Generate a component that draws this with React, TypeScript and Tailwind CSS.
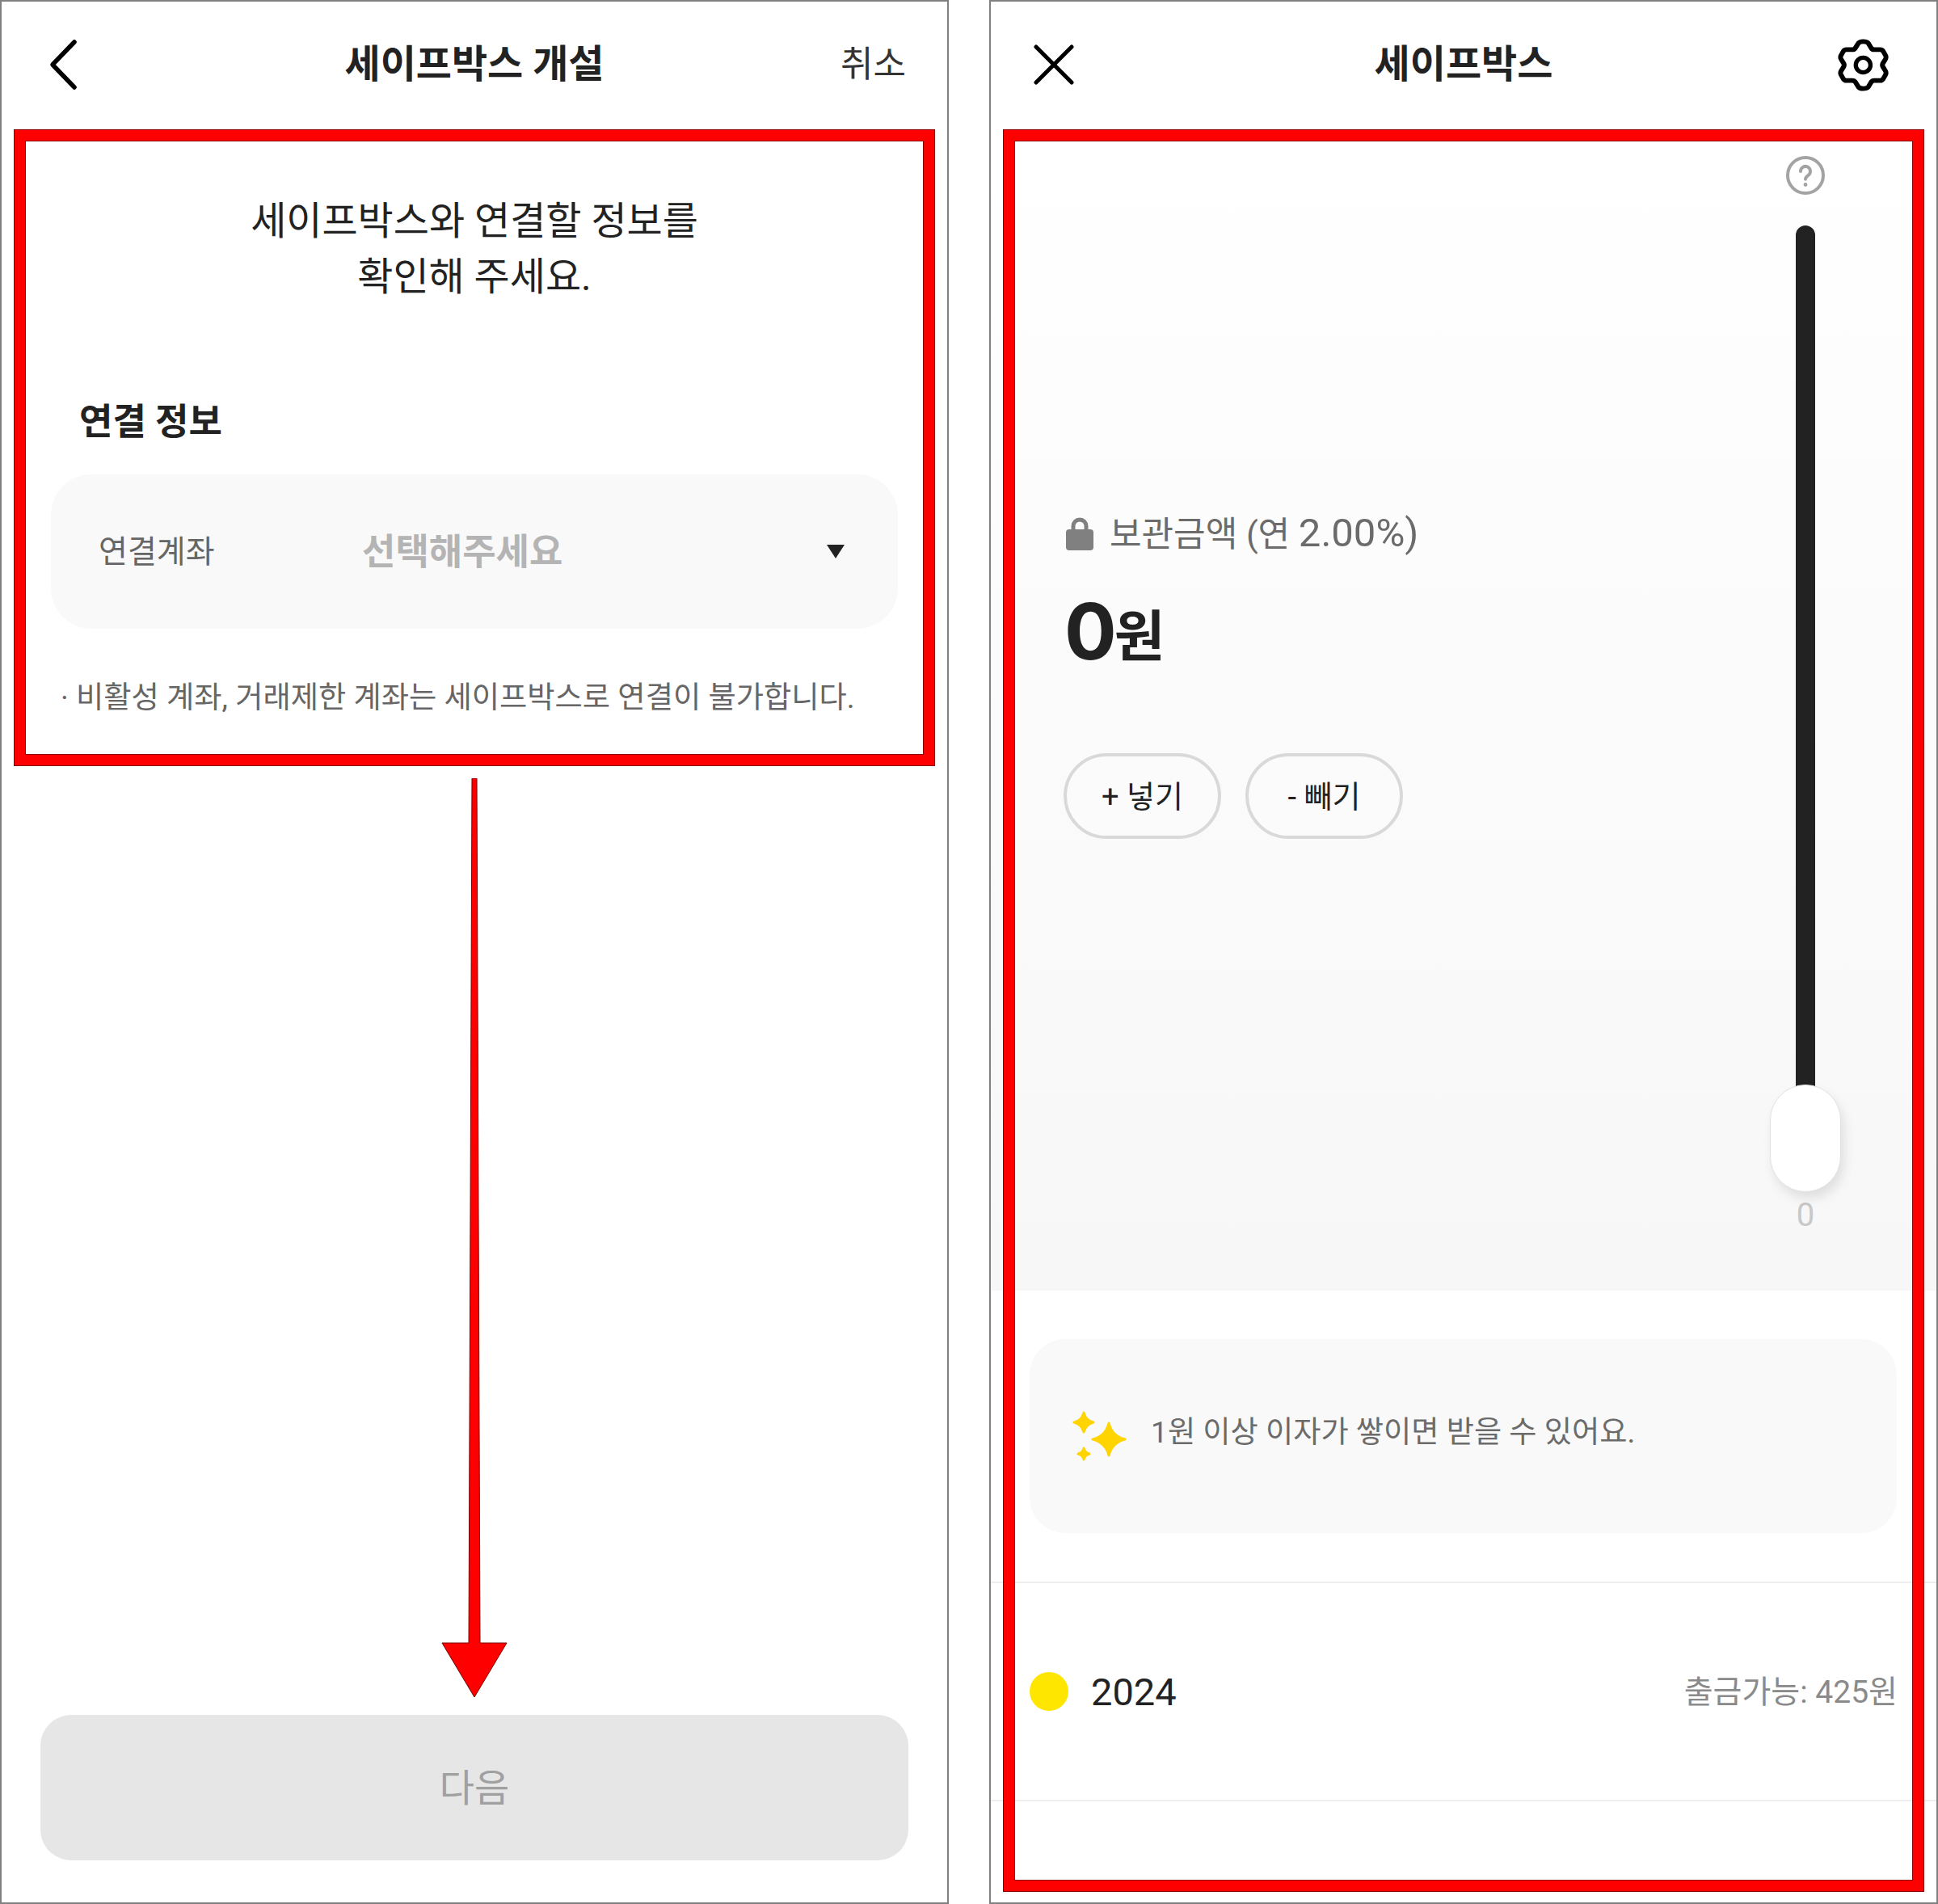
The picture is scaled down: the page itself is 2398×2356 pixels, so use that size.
const Star = ({ c, y, r }: { c: number; y: number; r: number }) => {
  const k = r * 0.2;
  return (
    <path
      d={`M${c} ${y - r}Q${c + k} ${y - k} ${c + r} ${y}Q${c + k} ${y + k} ${c} ${y + r}Q${c - k} ${y + k} ${c - r} ${y}Q${c - k} ${y - k} ${c} ${y - r}Z`}
      fill="#ffd400"
      stroke="#ffd400"
      strokeWidth="3"
      strokeLinejoin="round"
    />
  );
};

const Sparkles = () => (
  <svg width="70" height="64" viewBox="0 0 70 64" className="shrink-0">
    <Star c={15} y={15} r={12} />
    <Star c={46} y={36} r={20} />
    <Star c={15} y={54} r={7} />
  </svg>
);

const Lock = () => (
  <svg width="34" height="41" viewBox="0 0 34 41" className="shrink-0">
    <path d="M9 18V11a8 8 0 0 1 16 0v7" fill="none" stroke="#808080" strokeWidth="5" />
    <rect x="0" y="15" width="34" height="26" rx="4" fill="#808080" />
  </svg>
);

const HelpIcon = () => (
  <svg width="48" height="48" viewBox="0 0 48 48" className="shrink-0">
    <circle cx="24" cy="24" r="22" fill="none" stroke="#a3a3a3" strokeWidth="4" />
    <path d="M18 19a6 6 0 1 1 9.5 4.8c-2.2 1.5-3.5 2.4-3.5 5" fill="none" stroke="#a3a3a3" strokeWidth="4" strokeLinecap="round" />
    <circle cx="24" cy="35.5" r="2.4" fill="#a3a3a3" />
  </svg>
);

const BackIcon = () => (
  <svg width="36" height="64" viewBox="0 0 36 64" fill="none" className="ml-[8px]">
    <path d="M31 4L4 32L31 60" stroke="#000000" strokeWidth="5.5" strokeLinecap="round" strokeLinejoin="round" />
  </svg>
);

const CloseIcon = () => (
  <svg width="50" height="50" viewBox="0 0 50 50" fill="none" className="ml-[13px]">
    <path d="M3 3L47 47M47 3L3 47" stroke="#000000" strokeWidth="5" strokeLinecap="round" />
  </svg>
);

const GearIcon = () => (
  <svg width="94" height="85" viewBox="0 0 300 270" fill="none" className="justify-self-end mr-[3px]">
    <path
      d="M130 48Q135 42 148 42Q162 42 168 48L180 68Q184 74 192 74L215 74Q224 74 228 82L237 98Q240 105 236 112L226 128Q222 135 226 142L236 158Q240 165 237 172L228 188Q224 196 215 196L192 196Q184 196 180 202L168 222Q162 228 148 228Q135 228 130 222L117 202Q113 196 105 196L82 196Q73 196 69 188L60 172Q57 165 61 158L71 142Q75 135 71 128L61 112Q57 105 60 98L69 82Q73 74 82 74L105 74Q113 74 117 68Z"
      stroke="#000000"
      strokeWidth="19"
      strokeLinejoin="round"
    />
    <circle cx="148" cy="135" r="29" stroke="#000000" strokeWidth="17" />
  </svg>
);

const RedBox = ({ className }: { className: string }) => (
  <div
    className={`absolute pointer-events-none border-[13px] border-[#ff0000] shadow-[0_0_0_1px_#8a0000,inset_0_0_0_1px_#8a0000] ${className}`}
  />
);

const SetupScreen = () => (
  <div className="relative w-[1174px] h-[2356px] border-2 border-[#808080] bg-white flex flex-col">
    <div className="grid grid-cols-[1fr_auto_1fr] items-center h-[155px] px-[51px]">
      <BackIcon />
      <div className="text-[48px] font-bold text-[#222222]">세이프박스 개설</div>
      <div className="justify-self-end text-[44px] text-[#333333]">취소</div>
    </div>

    <div className="mt-[82px] text-center text-[48px] leading-[69px] text-[#222222]">
      세이프박스와 연결할 정보를
      <br />
      확인해 주세요.
    </div>

    <div className="mt-[116px] ml-[96px] text-[45px] leading-[60px] font-bold text-[#222222]">연결 정보</div>

    <div className="mt-[34px] mx-[61px] h-[191px] rounded-[50px] bg-[#f9f9f9] flex items-center pl-[59px] pr-[66px]">
      <div className="w-[326px] pt-[2px] text-[39px] text-[#666666]">연결계좌</div>
      <div className="flex-1 pt-[2px] text-[45px] font-bold text-[#b4b4b4]">선택해주세요</div>
      <div className="w-0 h-0 border-x-[11px] border-x-transparent border-t-[17px] border-t-[#222222]" />
    </div>

    <div className="mt-[60px] ml-[73px] text-[37.25px] leading-[50px] text-[#666666] whitespace-nowrap">
      · 비활성 계좌, 거래제한 계좌는 세이프박스로 연결이 불가합니다.
    </div>

    <div className="mt-auto mb-[52px] mx-[48px] h-[180px] pt-[2px] rounded-[38px] bg-[#e6e6e6] flex items-center justify-center text-[47px] text-[#a0a0a0]">
      다음
    </div>

    <RedBox className="left-[16px] top-[159px] w-[1138px] h-[786px]" />
    <svg width="83" height="1140" viewBox="0 0 83 1140" className="absolute left-[544px] top-[961px]">
      <polygon
        points="38,0 44,0 48,1070 81,1070 41,1137 1,1070 34,1070"
        fill="#ff0000"
        stroke="#7a0000"
        strokeWidth="1"
      />
    </svg>
  </div>
);

const SafeboxScreen = () => (
  <div className="relative w-[1174px] h-[2356px] border-2 border-[#808080] bg-white flex flex-col">
    <div className="grid grid-cols-[1fr_auto_1fr] items-center h-[158px] pb-[2px] px-[40px]">
      <CloseIcon />
      <div className="text-[48px] font-bold text-[#222222]">세이프박스</div>
      <GearIcon />
    </div>

    <div className="h-[1437px] flex justify-between bg-gradient-to-b from-white to-[#f7f7f7] pl-[90px] pr-[102px]">
      <div className="pt-[470px]">
        <div className="flex items-center gap-[20px] h-[60px] pl-[3px]">
          <Lock />
          <span className="text-[43px] text-[#6b6b6b]">
            보관금액 (연 <span className="text-[49px]">2.00%)</span>
          </span>
        </div>
        <div className="mt-[41px] pl-[1px] h-[100px] leading-[100px] font-bold text-[#222222] [font-family:Inter,'Noto_Sans_CJK_KR',sans-serif]">
          <span className="text-[96px] tracking-[-2px]">0</span>
          <span className="-ml-[1px] text-[68px] align-[4px]">원</span>
        </div>
        <div className="mt-[101px] flex gap-[30px]">
          <div className="w-[195px] h-[106px] pt-[2px] rounded-full border-4 border-[#d9d9d9] bg-[#fbfbfb] flex items-center justify-center text-[38px] text-[#222222]">
            + 넣기
          </div>
          <div className="w-[195px] h-[106px] pt-[2px] rounded-full border-4 border-[#d9d9d9] bg-[#fbfbfb] flex items-center justify-center text-[38px] text-[#222222]">
            - 빼기
          </div>
        </div>
      </div>

      <div className="w-[120px] pt-[33px] flex flex-col items-center">
        <HelpIcon />
        <div className="mt-[38px] w-[24px] h-[1085px] -mb-[22px] rounded-t-full bg-[#222222]" />
        <div className="relative w-[88px] h-[133px] rounded-full bg-white border border-[#e2e2e2] shadow-[4px_8px_14px_rgba(0,0,0,0.1)]" />
        <div className="mt-[9px] text-[40px] leading-[40px] text-[#c8c8c8]">0</div>
      </div>
    </div>

    <div className="mt-[60px] ml-[48px] mr-[49px] h-[240px] rounded-[44px] bg-[#f9f9f9] flex items-center pl-[52px] gap-[28px]">
      <Sparkles />
      <span className="pb-[8px] text-[37.2px] text-[#6b6b6b]">1원 이상 이자가 쌓이면 받을 수 있어요.</span>
    </div>

    <div className="mt-[60px] h-[272px] border-y-2 border-[#eeeeee] flex items-center justify-between pl-[48px] pr-[48px]">
      <div className="flex items-center gap-[28px]">
        <div className="w-[48px] h-[48px] rounded-full bg-[#ffe600]" />
        <span className="pt-[2px] text-[47px] text-[#222222]">2024</span>
      </div>
      <span className="pt-[2px] text-[39px] text-[#8a8a8a]">출금가능: 425원</span>
    </div>

    <RedBox className="left-[16px] top-[159px] w-[1138px] h-[2179px]" />
  </div>
);

export default function App() {
  return (
    <div className="w-[2398px] h-[2356px] bg-white flex gap-[50px] [font-family:Roboto,'Noto_Sans_CJK_KR',sans-serif]">
      <SetupScreen />
      <SafeboxScreen />
    </div>
  );
}
